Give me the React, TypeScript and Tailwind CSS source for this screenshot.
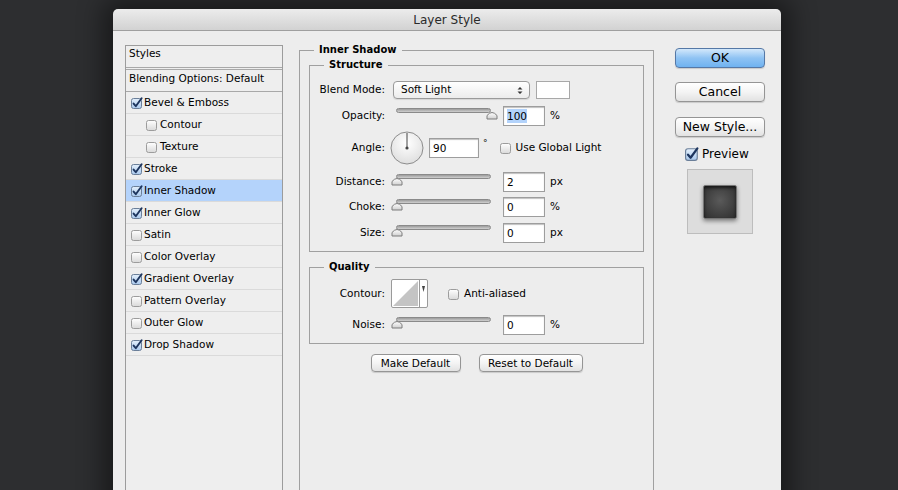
import React from 'react';

const font = "font-['DejaVu_Sans',sans-serif]";

const Check = ({ checked, big }: { checked?: boolean; big?: boolean }) => {
  const s = big ? 14 : 12;
  return (
    <svg width={s} height={s} viewBox="0 0 12 12" className="shrink-0">
      <defs>
        <linearGradient id={checked ? 'cbOn' : 'cbOff'} x1="0" y1="0" x2="0" y2="1">
          <stop offset="0" stopColor={checked ? '#e4f0fc' : '#ffffff'} />
          <stop offset="1" stopColor={checked ? '#a9c8ec' : '#d9d9d9'} />
        </linearGradient>
      </defs>
      <rect x="0.5" y="1.5" width="10" height="10" rx="2" fill={`url(#${checked ? 'cbOn' : 'cbOff'})`} stroke={checked ? '#6b7f99' : '#9c9c9c'} />
      {checked && (
        <path d="M2.6 6.6 L4.8 9.2 L10.6 1.2" fill="none" stroke="#1d355e" strokeWidth="1.9" strokeLinecap="round" strokeLinejoin="round" />
      )}
    </svg>
  );
};

const Thumb = () => (
  <svg width="12" height="11" viewBox="0 0 12 11">
    <defs>
      <linearGradient id="thumbG" x1="0" y1="0" x2="0" y2="1">
        <stop offset="0" stopColor="#ffffff" />
        <stop offset="1" stopColor="#cfcfcf" />
      </linearGradient>
    </defs>
    <path d="M1 10 L1 6.5 Q6 0.5 11 6.5 L11 10 Z" fill="url(#thumbG)" stroke="#7d7d7d" />
  </svg>
);

const Slider = ({ right }: { right?: boolean }) => (
  <div className="relative self-start mt-[2px] w-[95px] h-[14px] shrink-0">
    <div className="h-[5px] rounded-full bg-gradient-to-b from-[#9c9c9c] to-[#d0d0d0] border border-[#8a8a8a]" />
    <div className={`absolute top-[1px] ${right ? 'right-[-7px]' : 'left-[-5px]'}`}>
      <Thumb />
    </div>
  </div>
);

const Field = ({ value, w = 'w-[42px]', h = 'h-[20px]', selected }: { value: string; w?: string; h?: string; selected?: boolean }) => (
  <div className={`${w} ${h} shrink-0 bg-white border border-[#9d9d9d] shadow-[inset_0_1px_1px_rgba(0,0,0,0.25)] flex items-center pl-[3px]`}>
    <span className={selected ? 'bg-[#b3d3fb] leading-[14px]' : 'leading-[14px]'}>{value}</span>
  </div>
);

const Label = ({ children }: { children: React.ReactNode }) => (
  <div className="w-[75px] shrink-0 text-right">{children}</div>
);

const SliderRow = ({ label, value, unit, right, selected, className = '' }: { label: string; value: string; unit: string; right?: boolean; selected?: boolean; className?: string }) => (
  <div className={`flex items-center h-[20px] ${className}`}>
    <Label>{label}</Label>
    <div className="ml-[11px]" />
    <Slider right={right} />
    <div className="ml-[12px]" />
    <Field value={value} selected={selected} />
    <span className="ml-[5px]">{unit}</span>
  </div>
);

const styles: { name: string; checked: boolean; indent?: boolean; active?: boolean }[] = [
  { name: 'Bevel & Emboss', checked: true },
  { name: 'Contour', checked: false, indent: true },
  { name: 'Texture', checked: false, indent: true },
  { name: 'Stroke', checked: true },
  { name: 'Inner Shadow', checked: true, active: true },
  { name: 'Inner Glow', checked: true },
  { name: 'Satin', checked: false },
  { name: 'Color Overlay', checked: false },
  { name: 'Gradient Overlay', checked: true },
  { name: 'Pattern Overlay', checked: false },
  { name: 'Outer Glow', checked: false },
  { name: 'Drop Shadow', checked: true },
];

const MacButton = ({ children, primary, className = '' }: { children: React.ReactNode; primary?: boolean; className?: string }) => (
  <div
    className={`h-[20px] rounded-[4px] border flex items-center justify-center leading-none shadow-[0_1px_1px_rgba(0,0,0,0.15)] ${
      primary
        ? 'border-[#5578a6] bg-gradient-to-b from-[#d3e8fb] via-[#8fc3f3] to-[#6fb2f0]'
        : 'border-[#959595] bg-gradient-to-b from-[#ffffff] via-[#f4f4f4] to-[#e2e2e2]'
    } ${className}`}
  >
    {children}
  </div>
);

const App: React.FC = () => {
  return (
    <div className={`w-[898px] h-[490px] overflow-hidden bg-[#2d2e30] pt-[9px] pl-[113px] ${font} text-black`}>
      <div className="w-[668px] h-[520px] flex flex-col rounded-t-[5px] shadow-[0_0_26px_10px_rgba(0,0,0,0.45)]">
        {/* Title bar */}
        <div className="h-[22px] shrink-0 rounded-t-[5px] bg-gradient-to-b from-[#ececec] to-[#d2d2d2] border-b border-[#9f9f9f] flex items-center justify-center text-[12px] text-[#2a2a2a]">
          Layer Style
        </div>

        <div className="flex-1 bg-[#ededed] flex items-start pl-[12px] pt-[12px] text-[10.5px]">
          {/* Styles list */}
          <div className="mt-[2px] w-[158px] h-[480px] shrink-0 border border-[#9c9c9c] bg-[#eeeeee]">
            <div className="h-[22px] border-b border-[#a8a8a8] pl-[3px]">Styles</div>
            <div className="mt-[1px] h-[23px] border-y border-[#a8a8a8] pl-[3px] pt-[1px]">Blending Options: Default</div>
            {styles.map((s) => (
              <div
                key={s.name}
                className={`h-[22px] border-b border-[#dadada] flex items-center ${s.indent ? 'pl-[20px]' : 'pl-[5px]'} ${
                  s.active ? 'bg-[#b4d3fb]' : ''
                }`}
              >
                <Check checked={s.checked} />
                <span className={s.indent ? 'ml-[2px]' : 'ml-[1px]'}>{s.name}</span>
              </div>
            ))}
          </div>

          {/* Inner Shadow panel */}
          <fieldset className="ml-[16px] w-[355px] h-[480px] shrink-0 border border-[#a0a0a0] px-[9px]">
            <legend className="ml-[5px] px-[5px] font-bold text-[10px] leading-[14px]">Inner Shadow</legend>

            <fieldset className="mt-[1px] border border-[#a0a0a0] pt-[9px] pb-[8px]">
              <legend className="ml-[14px] px-[5px] font-bold text-[10px] leading-[14px]">Structure</legend>

              <div className="flex items-center h-[18px]">
                <Label>Blend Mode:</Label>
                <div className="ml-[8px] w-[137px] h-[18px] rounded-[4px] border border-[#9a9a9a] bg-gradient-to-b from-white to-[#ececec] flex items-center justify-between pl-[7px] pr-[6px] shadow-[0_1px_1px_rgba(0,0,0,0.1)]">
                  <span>Soft Light</span>
                  <svg width="6" height="9" viewBox="0 0 6 9">
                    <path d="M0.5 3.5 L3 1 L5.5 3.5 Z M0.5 5.5 L3 8 L5.5 5.5 Z" fill="#333" />
                  </svg>
                </div>
                <div className="ml-[6px] w-[34px] h-[18px] bg-white border border-[#a8a8a8]" />
              </div>

              <SliderRow label="Opacity:" value="100" unit="%" right selected className="mt-[7px]" />

              <div className="flex items-center h-[34px] mt-[5px]">
                <Label>Angle:</Label>
                <svg width="34" height="34" viewBox="0 0 34 34" className="ml-[5px] shrink-0">
                  <defs>
                    <radialGradient id="dial" cx="0.5" cy="0.35" r="0.7">
                      <stop offset="0" stopColor="#ffffff" />
                      <stop offset="1" stopColor="#dcdcdc" />
                    </radialGradient>
                  </defs>
                  <circle cx="17" cy="17" r="16" fill="url(#dial)" stroke="#8c8c8c" />
                  <line x1="17" y1="17" x2="17" y2="2" stroke="#444" strokeWidth="1" />
                  <circle cx="17" cy="17" r="1.6" fill="#444" />
                </svg>
                <div className="ml-[5px]" />
                <Field value="90" w="w-[50px]" />
                <span className="ml-[4px] self-start mt-[6px] text-[9px]">°</span>
                <div className="ml-[12px]">
                  <Check />
                </div>
                <span className="ml-[4px]">Use Global Light</span>
              </div>

              <SliderRow label="Distance:" value="2" unit="px" className="mt-[7px]" />
              <SliderRow label="Choke:" value="0" unit="%" className="mt-[5px]" />
              <SliderRow label="Size:" value="0" unit="px" className="mt-[6px]" />
            </fieldset>

            <fieldset className="mt-[8px] border border-[#a0a0a0] pt-[5px] pb-[8px]">
              <legend className="ml-[14px] px-[5px] font-bold text-[10px] leading-[14px]">Quality</legend>

              <div className="flex items-center h-[29px]">
                <Label>Contour:</Label>
                <div className="ml-[6px] w-[37px] h-[29px] shrink-0 border border-[#9a9a9a] bg-white flex rounded-[2px]">
                  <svg width="27" height="27" viewBox="0 0 27 27" className="shrink-0">
                    <path d="M1 26 L26 1 L26 26 Z" fill="#c4c4c4" />
                  </svg>
                  <div className="flex-1 border-l border-[#9a9a9a] flex items-start justify-center pt-[6px]">
                    <svg width="3" height="6" viewBox="0 0 3 6">
                      <path d="M0 0 L3 0 L1.5 6 Z" fill="#444" />
                    </svg>
                  </div>
                </div>
                <div className="ml-[20px]">
                  <Check />
                </div>
                <span className="ml-[4px]">Anti-aliased</span>
              </div>

              <SliderRow label="Noise:" value="0" unit="%" className="mt-[7px] h-[19px]" />
            </fieldset>

            <div className="mt-[10px] flex justify-center gap-[18px]">
              <MacButton className="w-[90px] !h-[18px]">Make Default</MacButton>
              <MacButton className="w-[104px] !h-[18px]">Reset to Default</MacButton>
            </div>
          </fieldset>

          {/* Right column */}
          <div className="ml-[21px] mt-[5px] w-[90px] flex flex-col text-[12.5px]">
            <MacButton primary>OK</MacButton>
            <MacButton className="mt-[14px]">Cancel</MacButton>
            <MacButton className="mt-[15px]">New Style...</MacButton>
            <div className="mt-[8px] ml-[10px] flex items-center text-[12px]">
              <Check checked big />
              <span className="ml-[3px]">Preview</span>
            </div>
            <div className="mt-[6px] ml-[12px] w-[66px] h-[65px] bg-[#dddddd] border border-[#bdbdbd] flex items-center justify-center">
              <div className="w-[34px] h-[34px] rounded-[2px] bg-[radial-gradient(circle_at_50%_45%,#5a5a5a,#2e2e2e)] border border-[#777] shadow-[0_2px_4px_rgba(0,0,0,0.45),inset_0_2px_3px_rgba(0,0,0,0.6)]" />
            </div>
          </div>
        </div>
      </div>
    </div>
  );
};

export default App;
